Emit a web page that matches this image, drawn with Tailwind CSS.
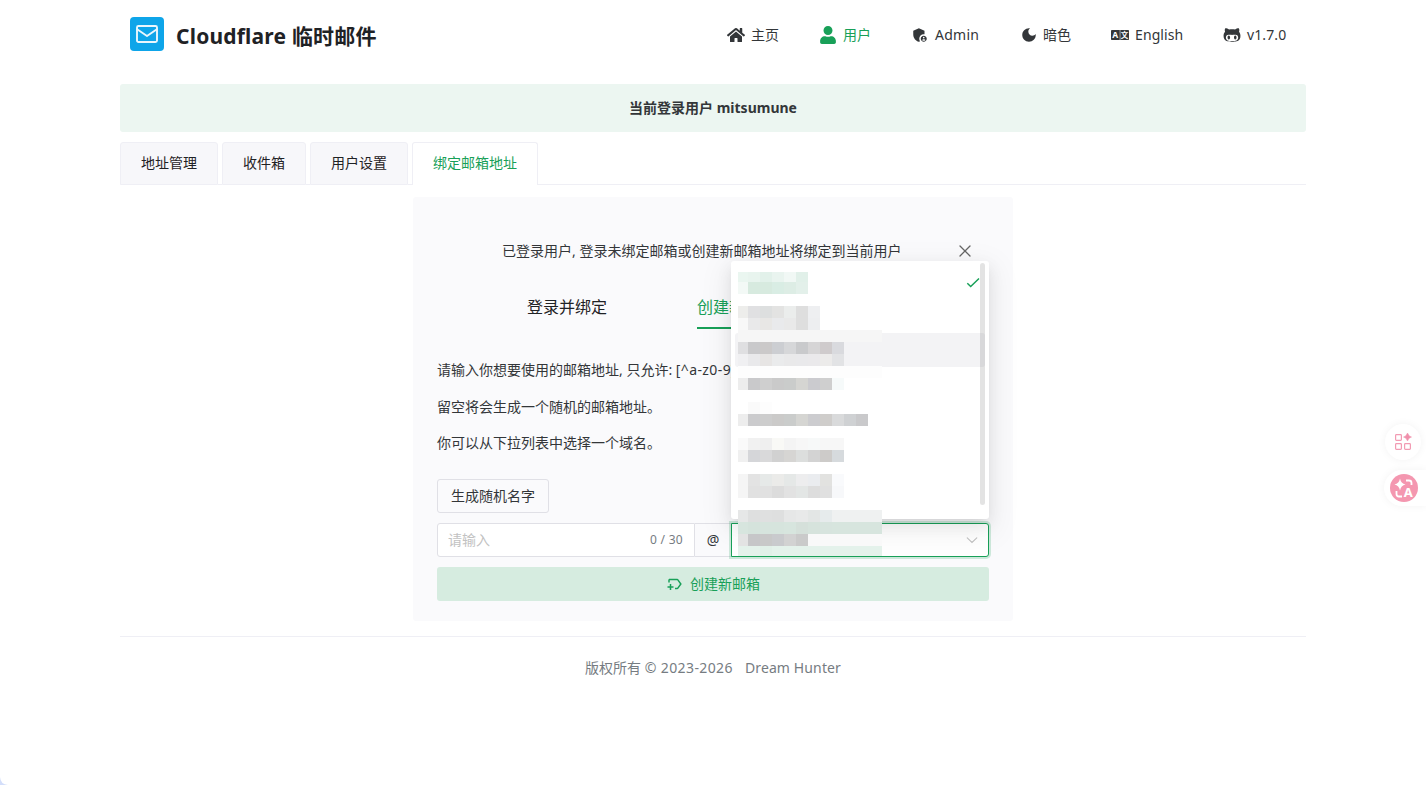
<!DOCTYPE html>
<html lang="zh-CN">
<head>
    <meta charset="UTF-8">
    <meta name="viewport" content="width=device-width, initial-scale=1.0">
    <title>Cloudflare 临时邮件</title>
    <script src="https://cdn.jsdelivr.net/npm/@tailwindcss/browser@4"></script>
</head>
<body class="relative h-[785px] overflow-hidden bg-white font-['Noto_Sans','Noto_Sans_CJK_SC',sans-serif] text-sm leading-[22px] text-[#333639]">
    <div class="mx-[120px]">
        <header class="flex h-[70px] items-center pl-2.5 pr-0">
            <div class="mb-0.5 flex size-[34px] items-center justify-center rounded bg-[#0ea5e9]">
                <svg class="h-[22px] w-[22px]" viewBox="0 0 22 22" fill="none" stroke="#eaf7fd" stroke-width="1.900" stroke-linejoin="round" stroke-linecap="round">
                    <rect x="1" y="3" width="20" height="16" rx="1.5"/>
                    <path d="M1.5 6.5 11 13l9.500-6.500"/>
                </svg>
            </div>
            <h1 class="ml-3 mt-0.5 whitespace-nowrap text-[21px] font-bold leading-8 tracking-[0.2px] text-[#1f2225]">Cloudflare 临时邮件</h1>
            <nav class="ml-auto grid grid-cols-[92px_92px_109px_91px_112px_83px] whitespace-nowrap">
                <a class="flex items-center gap-1.5">
                    <svg class="size-[18px]" viewBox="0 0 576 512" fill="currentColor"><path d="M280.37 148.26L96 300.11V464a16 16 0 0 0 16 16l112.06-.29a16 16 0 0 0 15.92-16V368a16 16 0 0 1 16-16h64a16 16 0 0 1 16 16v95.64a16 16 0 0 0 16 16.05L464 480a16 16 0 0 0 16-16V300L295.67 148.26a12.19 12.19 0 0 0-15.3 0zM571.6 251.47L488 182.56V44.05a12 12 0 0 0-12-12h-56a12 12 0 0 0-12 12v72.61L318.47 43a48 48 0 0 0-61 0L4.34 251.47a12 12 0 0 0-1.6 16.9l25.5 31A12 12 0 0 0 45.15 301l235.22-193.74a12.19 12.19 0 0 1 15.3 0L530.9 301a12 12 0 0 0 16.9-1.6l25.5-31a12 12 0 0 0-1.7-16.93z"/></svg>
                    <span>主页</span>
                </a>
                <a class="flex items-center gap-1.5 text-[#18a058]">
                    <svg class="size-[18px]" viewBox="0 0 448 512" fill="currentColor"><path d="M224 256c70.7 0 128-57.3 128-128S294.7 0 224 0 96 57.3 96 128s57.3 128 128 128zm89.6 32h-16.7c-22.2 10.2-46.9 16-72.9 16s-50.6-5.8-72.9-16h-16.7C60.2 288 0 348.2 0 422.4V464c0 26.5 21.5 48 48 48h352c26.500 0 48-21.500 48-48v-41.600c0-74.200-60.200-134.400-134.400-134.400z"/></svg>
                    <span>用户</span>
                </a>
                <a class="flex items-center gap-1.5">
                    <svg class="size-[18px]" viewBox="0 0 24 24" fill="currentColor"><path d="M17 11c.34 0 .67.04 1 .09V6.27L10.5 3 3 6.27v4.91c0 4.54 3.2 8.79 7.5 9.82.55-.13 1.08-.32 1.6-.55-.69-.98-1.1-2.17-1.1-3.45 0-3.31 2.69-6 6-6z"/><path d="M17 13c-2.21 0-4 1.79-4 4s1.79 4 4 4 4-1.79 4-4-1.79-4-4-4zm0 1.38c.62 0 1.12.51 1.12 1.12s-.51 1.12-1.12 1.12-1.12-.51-1.12-1.12.5-1.12 1.12-1.12zm0 5.37c-.93 0-1.74-.46-2.24-1.17.05-.72 1.51-1.08 2.24-1.08s2.19.36 2.24 1.08c-.5.71-1.31 1.17-2.24 1.17z"/></svg>
                    <span class="tracking-[0.25px]">Admin</span>
                </a>
                <a class="flex items-center gap-[5px]">
                    <svg class="size-[18px]" viewBox="0 0 24 24" fill="currentColor"><path d="M12 3c-4.97 0-9 4.03-9 9s4.03 9 9 9 9-4.03 9-9c0-.46-.04-.92-.1-1.36-.98 1.37-2.58 2.26-4.4 2.26-2.98 0-5.4-2.42-5.4-5.4 0-1.81.89-3.42 2.26-4.4-.44-.06-.9-.1-1.36-.1z"/></svg>
                    <span>暗色</span>
                </a>
                <a class="flex items-center gap-1.5">
                    <svg class="size-[18px]" viewBox="0 0 18 18">
                        <rect x="0" y="4" width="18" height="10" rx="0.8" fill="#333639"/>
                        <rect x="8.600" y="4" width="0.900" height="10" fill="#aaa"/>
                        <text x="4.300" y="12.100" text-anchor="middle" font-size="8.500" font-weight="700" fill="#fff">A</text>
                        <text x="13.600" y="11.800" text-anchor="middle" font-size="7.500" font-weight="700" fill="#fff">文</text>
                    </svg>
                    <span class="tracking-[0.1px]">English</span>
                </a>
                <a class="flex items-center gap-1.5">
                    <svg class="size-[18px]" viewBox="0 0 480 512" fill="currentColor"><path d="M186.1 328.7c0 20.9-10.9 55.1-36.7 55.1s-36.7-34.2-36.7-55.1 10.9-55.1 36.7-55.1 36.7 34.2 36.7 55.1zM480 278.2c0 31.9-3.2 65.7-17.5 95-37.9 76.6-142.1 74.8-216.7 74.8-75.8 0-186.2 2.7-225.6-74.8-14.6-29-20.2-63.1-20.2-95 0-41.9 13.9-81.5 41.5-113.6-5.2-15.8-7.7-32.4-7.7-48.8 0-21.5 4.9-32.3 14.6-51.8 45.3 0 74.3 9 108.8 36 29-6.9 58.8-10 88.7-10 27 0 54.2 2.9 80.4 9.2 34-26.7 63-35.2 107.8-35.2 9.8 19.5 14.6 30.3 14.6 51.8 0 16.4-2.6 32.7-7.7 48.2 27.5 32.4 39 72.3 39 114.2zm-64.3 50.5c0-43.9-26.7-82.6-73.5-82.6-18.9 0-37 3.4-56 6-14.9 2.3-29.8 3.2-45.1 3.2-15.2 0-30.1-.9-45.1-3.2-18.7-2.6-37-6-56-6-46.8 0-73.5 38.7-73.5 82.6 0 87.8 80.4 101.3 150.4 101.3h48.2c70.3 0 150.6-13.4 150.6-101.3zm-82.6-55.1c-25.8 0-36.7 34.2-36.7 55.1s10.9 55.1 36.7 55.1 36.7-34.2 36.7-55.1-10.9-55.1-36.7-55.1z"/></svg>
                    <span class="tracking-[0.1px]">v1.7.0</span>
                </a>
            </nav>
        </header>

        <div class="mt-3.5 flex h-12 items-center justify-center rounded-[3px] bg-[#ecf6f1] font-bold">当前登录用户 mitsumune</div>

        <!-- Tabs -->
        <div class="mt-2.5 flex h-[43px] whitespace-nowrap text-[#1f2225]">
            <div class="flex w-[98px] items-center justify-center rounded-t-[3px] border border-[#efeff5] bg-[#f7f7fa] pb-0.5">地址管理</div>
            <div class="w-1 border-b border-[#efeff5]"></div>
            <div class="flex w-[84px] items-center justify-center rounded-t-[3px] border border-[#efeff5] bg-[#f7f7fa] pb-0.5">收件箱</div>
            <div class="w-1 border-b border-[#efeff5]"></div>
            <div class="flex w-[98px] items-center justify-center rounded-t-[3px] border border-[#efeff5] bg-[#f7f7fa] pb-0.5">用户设置</div>
            <div class="w-1 border-b border-[#efeff5]"></div>
            <div class="flex w-[126px] items-center justify-center rounded-t-[3px] border border-b-0 border-[#efeff5] pb-[3px] text-[#18a058]">绑定邮箱地址</div>
            <div class="flex-1 border-b border-[#efeff5]"></div>
        </div>

        <!-- Bind address card -->
        <main class="mx-auto mt-3 flex h-[424px] w-[600px] flex-col rounded-[3px] bg-[#fafafc] px-6">
            <div class="mt-[42px] flex h-6 items-center justify-between pl-[65px] pr-4">
                <span class="whitespace-nowrap">已登录用户, 登录未绑定邮箱或创建新邮箱地址将绑定到当前用户</span>
                <svg class="mb-px size-4" viewBox="0 0 16 16" fill="none" stroke="#666" stroke-width="1.300" stroke-linecap="round"><path d="M3 3l10 10M13 3L3 13"/></svg>
            </div>
            <div class="mt-8 flex h-[34px] text-base text-[#1f2225]">
                <div class="ml-[90px] w-[170px]">登录并绑定</div>
                <div class="w-20 border-b-2 border-[#18a058] text-[#18a058]">创建新邮箱</div>
            </div>
            <div class="mt-[30px] space-y-[14.500px]">
                <p>请输入你想要使用的邮箱地址, 只允许: <span class="tracking-[0.4px]">[^a-z0-9]</span></p>
                <p>留空将会生成一个随机的邮箱地址。</p>
                <p>你可以从下拉列表中选择一个域名。</p>
            </div>
            <button class="mt-[25px] h-[34px] w-28 shrink-0 rounded-[3px] border border-[#e0e0e6]">生成随机名字</button>
            <div class="mt-2.5 flex h-[34px] shrink-0">
                <div class="flex w-[258px] items-center justify-between rounded-l-[3px] border border-[#e0e0e6] bg-white pl-2.5 pr-[11px]">
                    <span class="text-[#c2c2c2]">请输入</span>
                    <span class="text-xs tracking-[0.3px] text-[#767c82]">0 / 30</span>
                </div>
                <div class="flex w-9 items-center justify-center border-y border-[#e0e0e6]">@</div>
                <div class="relative flex w-[258px] items-center justify-end rounded-r-[3px] border border-[#18a058] bg-white pr-2 shadow-[0_0_0_2px_rgba(24,160,88,0.2)]">
                    <svg class="size-4" viewBox="0 0 16 16" fill="none" stroke="#c2c2c2" stroke-width="1.100" stroke-linecap="round"><path d="M3.200 5.800 8 10.500l4.800-4.700"/></svg>
                    <!-- Open domain list, sits above the select -->
                    <div class="absolute -left-px -top-[263px] h-[258px] w-[258px] rounded-[3px] bg-white py-1 pl-1 shadow-[0_3px_6px_-4px_rgba(0,0,0,0.12),0_6px_16px_0_rgba(0,0,0,0.08),0_9px_28px_8px_rgba(0,0,0,0.05)]">
                        <div class="flex h-[34px] items-center justify-end pr-[9px] pt-0.5">
                            <svg class="h-[14px] w-[14px]" viewBox="0 0 14 14" fill="none" stroke="#18a058" stroke-width="1.500"><path d="M1.300 7.200 4.700 10.500 13 2.500"/></svg>
                        </div>
                        <div class="mt-[34px] h-[34px] w-[250px] rounded-[3px] bg-[#f3f3f5]"></div>
                        <div class="absolute right-1 top-0.5 h-[242px] w-[5px] rounded-full bg-black/11"></div>
                        <svg id="mosaic" class="absolute left-[7px] top-[11px] h-[284px] w-36" viewBox="738 272 144 284" shape-rendering="crispEdges"></svg>
                    </div>
                </div>
            </div>
            <button class="mt-2.5 flex h-[34px] shrink-0 items-center justify-center gap-1.5 rounded-[3px] bg-[#d6ece0] text-[#18a058]">
                <svg class="size-[18px]" viewBox="0 0 24 24" fill="currentColor"><path d="M21 12l-4.370 6.160c-.37.52-.98.84-1.630.84h-3v-2h3l3.550-5L15 7H5v3H3V7c0-1.100.9-2 2-2h10c.65 0 1.260.31 1.630.84L21 12zm-11 3H7v-3H5v3H2v2h3v3h2v-3h3v-2z"/></svg>
                <span>创建新邮箱</span>
            </button>
        </main>

        <footer class="mt-[15px] flex justify-center gap-3 border-t border-[#efeff5] pt-5 text-[#767c82]">
            <span>版权所有 <span class="tracking-[0.4px]">© 2023-2026</span></span>
            <span class="tracking-[0.12px]">Dream Hunter</span>
        </footer>
    </div>

    <!-- Floating browser helpers -->
    <div class="absolute right-0 top-[424px] flex w-[42px] flex-col items-start gap-2.5">
        <div class="ml-px flex size-9 items-center justify-center rounded-full bg-white shadow-[0_0_8px_rgba(0,0,0,0.05)]">
            <svg class="size-[18px]" viewBox="0 0 18 18" fill="none" stroke="#f29bb3" stroke-width="1.200">
                <rect x="1.600" y="1.600" width="5.800" height="5.800" rx="0.800"/>
                <rect x="1.600" y="10.600" width="5.800" height="5.800" rx="0.800"/>
                <rect x="10.600" y="10.600" width="5.800" height="5.800" rx="0.800"/>
                <path d="M13.500 0q1 3.300 4 4-3 .7-4 4-1-3.300-4-4 3-.7 4-4z" fill="#f08fab" stroke="#f08fab" stroke-width="0.500"/>
            </svg>
        </div>
        <div class="flex h-9 w-full items-center rounded-l-full bg-white pl-1.5 shadow-[0_0_8px_rgba(0,0,0,0.05)]">
            <svg class="size-7" viewBox="0 0 28 28" fill="none">
                <circle cx="14" cy="14" r="14" fill="#f497b0"/>
                <path d="M10 4.500q.9 5 5.500 6-4.600 1-5.500 6-.9-5-5.500-6 4.600-1 5.500-6z" fill="#fff"/>
                <path d="M16 6.500h3q2.500 0 2.500 2.500v2M6.500 17v3q0 2.500 2.500 2.500h3" stroke="#fff" stroke-width="1.800"/>
                <text x="18.300" y="23" text-anchor="middle" font-size="13" font-weight="700" fill="#fff">A</text>
            </svg>
        </div>
    </div>
    <svg class="absolute bottom-0 left-0 size-2" viewBox="0 0 8 8" fill="#d3defa"><path d="M0 0q.5 7.500 8 8H0z"/></svg>

    <script>
        // Pixelated domain names: [top, height, colours per column]; last column edge is 882
        const edges = [738, 748, 760, 772, 784, 796, 808, 820, 832, 844, 856, 868, 882];
        const rows = [
            [272, 10, "#eaf6f0 #e8f4ee #e2f1ea #e9f4ef #f1f8f5 #e1f0e9"],
            [282, 12, "#f3f9f6 #d7eadf #d7eadf #d9ede4 #ddede5 #e3f0ea"],
            [306, 12, "#ededeb #e0e0e2 #dddfdf #e3e3e2 #ebedec #dedede #eeeff1"],
            [318, 12, "#f8f8f8 #e9e9ea #e8e7e5 #e9eaec #e9e9e9 #dedede #edeef0"],
            [330, 12, "#f6f6f6 #f6f6f6 #f6f6f6 #f6f6f6 #f6f6f6 #f6f6f6 #f6f6f6 #f6f6f6 #f6f6f6 #f6f6f6 #f6f6f6 #f6f6f6"],
            [342, 12, "#dfdfe1 #c9c9cb #cbc9c9 #ccced2 #d6d7d9 #c9cacc #d6d5d6 #cfcbcc #d9dade"],
            [354, 12, "#f0f0f2 #e9e9eb #e7e5e4 #eaebec #e9e9ea #e9e9eb #eae9eb #ecebea #e2e3e5"],
            [366, 12, "#fdfdfd #fdfdfd #fdfdfd #fdfdfd #fdfdfd #fdfdfd #fdfdfd #fdfdfd #fdfdfd #fdfdfd #fdfdfd #fdfdfd"],
            [378, 12, "#ededed #c9c9cb #cfcfcf #cacaca #cacccb #d5d5d2 #cbcbcf #cfcfcf #f6fafa"],
            [402, 12, "#ffffff #fafafa #fdfdfd"],
            [414, 12, "#ededed #cbcbcd #cdcdcd #cbcac9 #cacccb #d5d5d2 #cccccf #cfcdcb #d9dadb #cfd1d3 #c9c9cb"],
            [438, 12, "#fafafa #f1f1f1 #efefef #f9f9f6 #f4f4f4 #f7f7f7 #f7f9f9 #f7f7f7 #f7f7f7"],
            [450, 12, "#f0f0f0 #d5d6d9 #d9d9da #d1d1d1 #d6d5d3 #dcdedd #d3d3d3 #cdcbc9 #d6dadd"],
            [474, 12, "#f5f5f5 #e3e3e3 #e6e9e8 #ebebe9 #e5e8e7 #ededee #eaecef #e2e2e0 #f9fafc"],
            [486, 12, "#f5f5f5 #e1e1e1 #e1e1e1 #dcdcdc #e2e2e2 #e3e6e5 #dddddd #e0e0e0 #f7f8fa"],
            [510, 12, "#e6e7e7 #dedfdf #dfe0e0 #dedfdf #e6e7e7 #e8e9e9 #e3e6e5 #e6ebec #eff1f1 #eff1f1 #eff1f1 #eff1f1"],
            [522, 12, "#d7e5de #d5e3dc #d6e4dd #d6e4dd #d7e5de #d5e0da #d6e3dc #d7e4de #d7e5de #d7e5de #d7e5de #d7e5de"],
            [534, 12, "#e3e3e3 #c6c6c8 #c8c8c8 #c9cacd #d2d2d2 #cacaca #f9f9f9 #f9f9f9 #f9f9f9 #f9f9f9 #f9f9f9 #f9f9f9"],
            [546, 10, "#e4f2eb #e4f2eb #e1f0e8 #e4f2eb #e4f2eb #e4f2eb #e4f2eb #e4f2eb #e4f2eb #e4f2eb #e4f2eb #e4f2eb"],
        ];
        document.getElementById("mosaic").innerHTML = rows.map(([y, h, colors]) =>
            colors.split(" ").map((fill, i) =>
                `<rect x="${edges[i]}" y="${y}" width="${edges[i + 1] - edges[i]}" height="${h}" fill="${fill}"/>`
            ).join("")
        ).join("");
    </script>
</body>
</html>
